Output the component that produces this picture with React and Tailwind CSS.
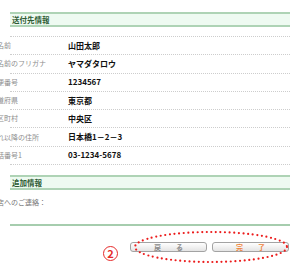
const rows = [
  { label: "お名前", value: "山田太郎" },
  { label: "お名前のフリガナ", value: "ヤマダタロウ" },
  { label: "郵便番号", value: "1234567" },
  { label: "都道府県", value: "東京都" },
  { label: "市区町村", value: "中央区" },
  { label: "それ以降の住所", value: "日本橋1－2－3" },
  { label: "電話番号1", value: "03-1234-5678" },
];

const SectionHeader = ({ title }) => (
  <div className="flex h-[15px] items-center border-y-2 border-y-[#aed3b5] bg-[#eefaf1] pl-[2px]">
    <span className="text-[7.5px] leading-none font-bold text-[#2d5a33]">{title}</span>
  </div>
);

const Button = ({ left, right, color }) => (
  <div
    className={`flex h-[10px] w-[77px] items-center justify-center gap-[15px] rounded-[3px] border border-[#a3a3a3] bg-gradient-to-b from-white to-[#e4e4e4] text-[7px] leading-none font-bold ${color}`}
  >
    <span>{left}</span>
    <span>{right}</span>
  </div>
);

export default function App() {
  return (
    <div className="relative h-[280px] w-[300px] overflow-hidden bg-white font-['Noto_Sans_CJK_JP',sans-serif]">
      <div className="px-[10px] pt-[12px]">
        <SectionHeader title="送付先情報" />

        <div className="mt-[9px] border-t border-dotted border-[#cdcdcd]">
          {rows.map((row) => (
            <div
              key={row.label}
              className="flex h-[18.3px] items-center border-b border-dotted border-[#cdcdcd]"
            >
              <span className="-ml-[20px] w-[78px] shrink-0 text-[7px] leading-none whitespace-nowrap text-[#8e8e8e]">
                {row.label}
              </span>
              <span className="text-[8px] leading-none font-bold text-[#111]">{row.value}</span>
            </div>
          ))}
        </div>

        <div className="mt-[10px]">
          <SectionHeader title="追加情報" />
        </div>

        <div className="h-[34px] pt-[8px]">
          <p className="-ml-[20px] text-[7px] leading-[8px] text-[#777]">お店へのご連絡：</p>
        </div>
        <div className="h-[2px] bg-[#a6cdae]" />

        <div className="mt-[16px] flex items-start justify-end gap-[5px] pr-[1px]">
          <div className="mt-[4px] mr-[7px] flex h-[15px] w-[15px] items-center justify-center rounded-full border border-[#e62a2a] text-[11px] leading-none font-bold text-[#e62a2a]">
            2
          </div>
          <Button left="戻" right="る" color="text-[#8a8a8a]" />
          <Button left="完" right="了" color="text-[#f0843c]" />
        </div>
      </div>

      <svg
        className="absolute left-[133px] top-[230px]"
        width="156"
        height="34"
        viewBox="0 0 156 34"
      >
        <ellipse
          cx="78"
          cy="17"
          rx="76"
          ry="15"
          fill="none"
          stroke="#ec1c1c"
          strokeWidth="2.2"
          strokeLinecap="round"
          strokeDasharray="0 4.6"
        />
      </svg>
    </div>
  );
}
